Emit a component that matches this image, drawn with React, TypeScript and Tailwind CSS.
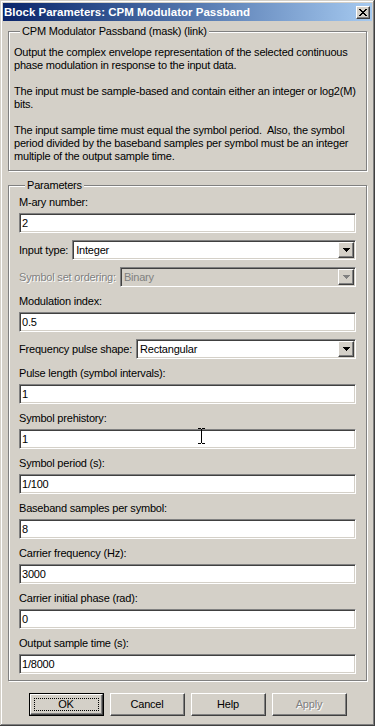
import React from 'react';

// classic win9x bevels
const sunken =
  'border border-t-[#808080] border-l-[#808080] border-b-white border-r-white shadow-[inset_1px_1px_0_#404040,inset_-1px_-1px_0_#d4d0c8]';
const raised =
  'border border-t-white border-l-white border-b-[#404040] border-r-[#404040] shadow-[inset_-1px_-1px_0_#808080,inset_1px_1px_0_#d4d0c8]';
const etched =
  'border border-[#808080] shadow-[inset_1px_1px_0_#fff,1px_1px_0_#fff]';

type Field =
  | { kind: 'edit'; label: string; value: string }
  | { kind: 'popup'; label: string; value: string; disabled?: boolean };

const FIELDS: Field[] = [
  { kind: 'edit', label: 'M-ary number:', value: '2' },
  { kind: 'popup', label: 'Input type:', value: 'Integer' },
  { kind: 'popup', label: 'Symbol set ordering:', value: 'Binary', disabled: true },
  { kind: 'edit', label: 'Modulation index:', value: '0.5' },
  { kind: 'popup', label: 'Frequency pulse shape:', value: 'Rectangular' },
  { kind: 'edit', label: 'Pulse length (symbol intervals):', value: '1' },
  { kind: 'edit', label: 'Symbol prehistory:', value: '1' },
  { kind: 'edit', label: 'Symbol period (s):', value: '1/100' },
  { kind: 'edit', label: 'Baseband samples per symbol:', value: '8' },
  { kind: 'edit', label: 'Carrier frequency (Hz):', value: '3000' },
  { kind: 'edit', label: 'Carrier initial phase (rad):', value: '0' },
  { kind: 'edit', label: 'Output sample time (s):', value: '1/8000' },
];

const CloseGlyph = () => (
  <svg width="8" height="7" viewBox="0 0 8 7" shapeRendering="crispEdges">
    <path d="M0 0h2v1H0zM6 0h2v1H6zM1 1h2v1H1zM5 1h2v1H5zM2 2h4v1H2zM3 3h2v1H3zM2 4h4v1H2zM1 5h2v1H1zM5 5h2v1H5zM0 6h2v1H0zM6 6h2v1H6z" fill="#000" />
  </svg>
);

const ArrowGlyph = ({ color }: { color: string }) => (
  <svg width="7" height="4" viewBox="0 0 7 4" shapeRendering="crispEdges">
    <path d="M0 0h7v1H0zM1 1h5v1H1zM2 2h3v1H2zM3 3h1v1H3z" fill={color} />
  </svg>
);

const EditBox = ({ value }: { value: string }) => (
  <div className={`h-[20px] bg-white ${sunken} flex items-center pl-[2px] text-black`}>{value}</div>
);

const Popup = ({ value, disabled }: { value: string; disabled?: boolean }) => (
  <div
    className={`flex-1 h-[20px] ${sunken} flex items-center pl-[3px] pr-[1px] ${
      disabled ? 'bg-[#d4d0c8] text-[#808080]' : 'bg-white text-black'
    }`}
  >
    <span className="flex-1">{value}</span>
    <div className={`w-[16px] h-[16px] bg-[#d4d0c8] ${raised} flex items-center justify-center`}>
      <ArrowGlyph color={disabled ? '#808080' : '#000'} />
    </div>
  </div>
);

const Button = ({ label, isDefault, disabled }: { label: string; isDefault?: boolean; disabled?: boolean }) => {
  if (isDefault) {
    return (
      <div className="w-[75px] h-[23px] border border-black">
        <div className={`h-full w-full ${raised} p-[3px] flex`}>
          <span className="flex-1 border border-dotted border-black flex items-center justify-center">{label}</span>
        </div>
      </div>
    );
  }
  return (
    <div className={`w-[75px] h-[23px] ${raised} flex items-center justify-center`}>
      <span className={disabled ? 'text-[#808080] [text-shadow:1px_1px_0_#fff]' : ''}>{label}</span>
    </div>
  );
};

export default function App() {
  return (
    <div
      className="relative w-[375px] h-[726px] bg-[#d4d0c8] p-[3px] flex flex-col text-[11px] leading-[13px] tracking-[-0.2px] text-black font-['Liberation_Sans',Arial,sans-serif] shadow-[inset_-1px_-1px_0_#404040,inset_1px_1px_0_#d4d0c8,inset_-2px_-2px_0_#808080,inset_2px_2px_0_#fff]"
    >
      {/* title bar */}
      <div className="h-[18px] bg-linear-to-r from-[#0a246a] to-[#a6caf0] flex items-center pl-[1px] pr-[2px]">
        <span className="flex-1 text-white font-bold text-[11.5px] tracking-normal leading-[18px] whitespace-nowrap">
          Block Parameters: CPM Modulator Passband
        </span>
        <div className={`w-[14px] h-[13px] bg-[#d4d0c8] ${raised} flex items-center justify-center`}>
          <CloseGlyph />
        </div>
      </div>

      <div className="flex-1 flex flex-col px-[5px]">
        <fieldset className={`mt-[4px] ${etched} px-[5px] pt-[8px] pb-[7px]`}>
          <legend className="ml-[6px] px-[2px] bg-[#d4d0c8]">CPM Modulator Passband (mask) (link)</legend>
          <p>
            Output the complex envelope representation of the selected continuous phase modulation in
            response to the input data.
          </p>
          <p className="mt-[13px]">The input must be sample-based and contain either an integer or log2(M) bits.</p>
          <p className="mt-[13px]">
            The input sample time must equal the symbol period.&nbsp; Also, the symbol period divided by the
            baseband samples per symbol must be an integer multiple of the output sample time.
          </p>
        </fieldset>

        <fieldset className={`mt-[8px] ${etched} px-[10px] pt-[3px] pb-[6px]`}>
          <legend className="ml-[6px] px-[2px] bg-[#d4d0c8]">Parameters</legend>
          <div className="flex flex-col gap-[7px]">
            {FIELDS.map((f) =>
              f.kind === 'edit' ? (
                <div key={f.label}>
                  <div className="h-[14px] leading-[14px] mb-[4px]">{f.label}</div>
                  <EditBox value={f.value} />
                </div>
              ) : (
                <div key={f.label} className="flex items-center gap-[4px]">
                  <span className={f.disabled ? 'text-[#808080] [text-shadow:1px_1px_0_#fff]' : ''}>{f.label}</span>
                  <Popup value={f.value} disabled={f.disabled} />
                </div>
              )
            )}
          </div>
        </fieldset>

        <div className="mt-[12px] flex justify-center gap-[6px]">
          <Button label="OK" isDefault />
          <Button label="Cancel" />
          <Button label="Help" />
          <Button label="Apply" disabled />
        </div>
      </div>

      {/* text cursor hovering over the prehistory field */}
      <svg className="absolute left-[198px] top-[428px]" width="7" height="16" viewBox="0 0 7 16" shapeRendering="crispEdges">
        <path d="M0 0h3v1H0zM4 0h3v1H4zM3 1h1v14H3zM0 15h3v1H0zM4 15h3v1H4z" fill="#000" />
      </svg>
    </div>
  );
}
